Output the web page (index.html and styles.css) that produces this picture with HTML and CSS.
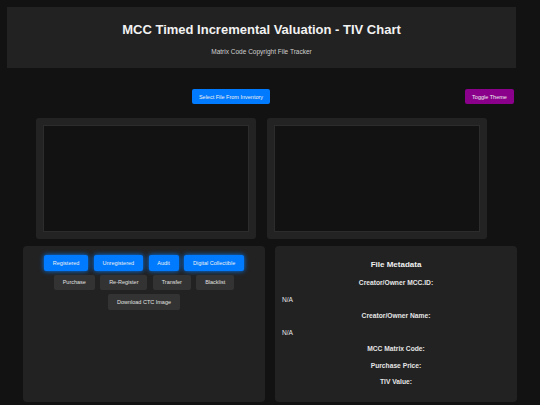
FILE: index.html
```html
<!DOCTYPE html>
<html>
<head>
<meta charset="utf-8">
<link rel="stylesheet" href="styles.css">
</head>
<body>
<div class="top">
  <header class="header">
    <h1 class="title">MCC Timed Incremental Valuation - TIV Chart</h1>
    <p class="subtitle">Matrix Code Copyright File Tracker</p>
  </header>
  <div class="controls">
    <button class="btn btn-blue select-btn">Select File From Inventory</button>
    <button class="btn btn-purple toggle-btn">Toggle Theme</button>
  </div>
  <div class="charts">
    <div class="chart-box"><div class="canvas"></div></div>
    <div class="chart-box"><div class="canvas"></div></div>
  </div>
</div>
<div class="panels">
  <div class="panel actions">
    <div class="btn-row">
      <button class="btn btn-glow">Registered</button>
      <button class="btn btn-glow">Unregistered</button>
      <button class="btn btn-glow">Audit</button>
      <button class="btn btn-glow">Digital Collectible</button>
    </div>
    <div class="btn-row">
      <button class="btn btn-gray">Purchase</button>
      <button class="btn btn-gray">Re-Register</button>
      <button class="btn btn-gray">Transfer</button>
      <button class="btn btn-gray">Blacklist</button>
    </div>
    <div class="btn-row">
      <button class="btn btn-gray">Download CTC Image</button>
    </div>
  </div>
  <div class="panel metadata">
    <h3 class="meta-title">File Metadata</h3>
    <div class="meta-label">Creator/Owner MCC.ID:</div>
    <div class="meta-value">N/A</div>
    <div class="meta-label">Creator/Owner Name:</div>
    <div class="meta-value">N/A</div>
    <div class="meta-label">MCC Matrix Code:</div>
    <div class="meta-label">Purchase Price:</div>
    <div class="meta-label">TIV Value:</div>
  </div>
</div>
</body>
</html>
```
FILE: styles.css
```css
html, body {
  margin: 0;
  padding: 0;
  background: #121212;
  color: #e6e6e6;
  font-family: "Liberation Sans", Arial, sans-serif;
}
body {
  width: 540px;
  height: 405px;
  overflow: hidden;
}
.top {
  margin-left: 7px;
  width: 509px;
  padding-top: 7px;
}
.header {
  background: #222222;
  height: 61px;
  text-align: center;
  box-sizing: border-box;
  padding-top: 15px;
}
.title {
  margin: 0;
  font-size: 13px;
  line-height: 16px;
  font-weight: bold;
  color: #f2f2f2;
}
.subtitle {
  margin: 8.5px 0 0;
  font-size: 6.5px;
  line-height: 9px;
  color: #d0d0d0;
}
.controls {
  display: flex;
  align-items: center;
  margin-top: 21px;
  height: 15px;
}
.btn {
  border: none;
  font-family: "Liberation Sans", Arial, sans-serif;
  font-size: 5.5px;
  color: #f0f0f0;
  border-radius: 2px;
  height: 15.5px;
  padding: 0 8.75px;
  margin: 0;
  cursor: pointer;
}
.btn-blue {
  background: #007bff;
}
.select-btn {
  margin-left: 185px;
  width: 78px;
  padding: 0;
}
.btn-purple {
  background: #8b008b;
}
.toggle-btn {
  margin-left: auto;
  margin-right: 2px;
  width: 49px;
  padding: 0;
}
.charts {
  display: flex;
  gap: 11px;
  margin-top: 14px;
  margin-left: 29px;
}
.chart-box {
  width: 220px;
  height: 121px;
  background: #232323;
  border-radius: 3px;
  padding: 7px;
  box-sizing: border-box;
}
.canvas {
  width: 100%;
  height: 100%;
  background: #121212;
  border: 1px solid #2c2c2c;
  box-sizing: border-box;
}
.panels {
  display: flex;
  gap: 10px;
  margin-top: 7px;
  margin-left: 23px;
}
.panel {
  width: 242px;
  height: 156px;
  background: #222222;
  border-radius: 4px;
  box-sizing: border-box;
}
.actions {
  padding-top: 9px;
  display: flex;
  flex-direction: column;
  gap: 4px;
}
.btn-row {
  display: flex;
  justify-content: center;
  gap: 5.7px;
}
.btn-glow {
  background: #007bff;
  box-shadow: 0 0 5px #007bff;
}
.btn-gray {
  background: #333333;
  color: #e0e0e0;
}
.metadata {
  padding: 13px 7px 0;
}
.meta-title {
  margin: 0 0 4px;
  text-align: center;
  font-size: 8px;
  line-height: 12px;
  font-weight: bold;
  color: #f0f0f0;
}
.meta-label {
  text-align: center;
  font-weight: bold;
  font-size: 6.7px;
  line-height: 16.5px;
  color: #e6e6e6;
}
.meta-value {
  text-align: left;
  font-size: 6.6px;
  line-height: 16.5px;
  color: #e6e6e6;
}
```
